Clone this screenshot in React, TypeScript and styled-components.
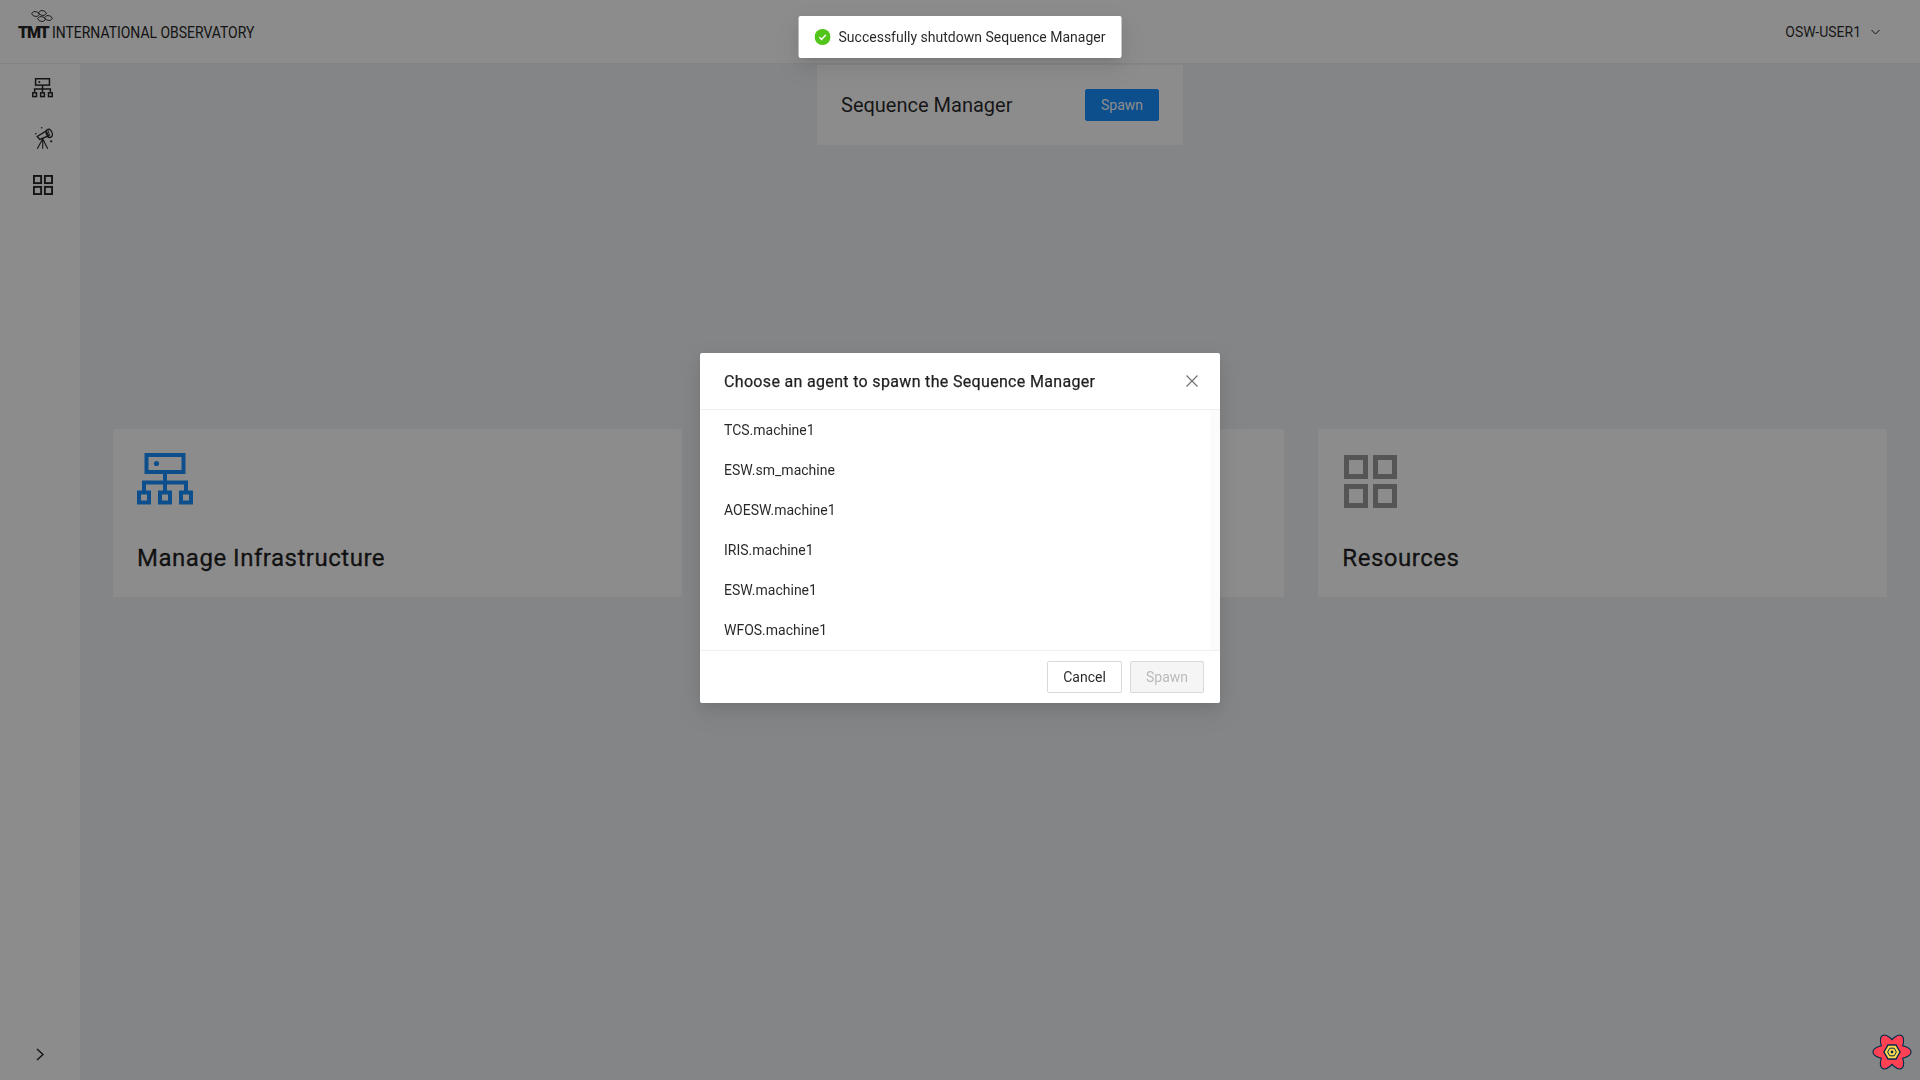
import React from "react";
import styled, { createGlobalStyle } from "styled-components";

const agents = [
  "TCS.machine1",
  "ESW.sm_machine",
  "AOESW.machine1",
  "IRIS.machine1",
  "ESW.machine1",
  "WFOS.machine1",
];

const meshCells = [
  [0, 1],
  [7, 0],
  [6, 6],
  [13, 5],
];

function InfraIcon({ size }: { size: number }) {
  return (
    <svg width={size} viewBox="0 0 56 52" fill="none" stroke="currentColor" strokeWidth="4">
      <rect x="9.5" y="2" width="37" height="17" />
      <circle cx="19.5" cy="10.5" r="2.6" fill="currentColor" stroke="none" />
      <path d="M28 19v19M7 38V29.5h42V38" />
      <rect x="2" y="39.5" width="10" height="10" />
      <rect x="23" y="39.5" width="10" height="10" />
      <rect x="44" y="39.5" width="10" height="10" />
    </svg>
  );
}

function GridIcon({ size }: { size: number }) {
  return (
    <svg width={size} height={size} viewBox="0 0 53 53" fill="none" stroke="currentColor" strokeWidth="5">
      <rect x="2.5" y="2.5" width="19" height="19" />
      <rect x="31.5" y="2.5" width="19" height="19" />
      <rect x="2.5" y="31.5" width="19" height="19" />
      <rect x="31.5" y="31.5" width="19" height="19" />
    </svg>
  );
}

function TelescopeIcon({ size }: { size: number }) {
  return (
    <svg width={size} viewBox="0 0 18 22" fill="none" stroke="currentColor" strokeWidth="1.1">
      <path d="M2.2 9.500l9-5.600 2.300 5-8.800 3.600z" strokeWidth="1.400" />
      <ellipse cx="14.200" cy="6.400" rx="2.900" ry="4.300" transform="rotate(-20 14.200 6.400)" strokeWidth="1.200" />
      <path d="M12.800 2.800l2.400 7" strokeWidth="0.900" />
      <path d="M7.700 11.700L2.300 21.800M7.700 11.700v10M7.700 11.700l5 10.100" />
      <circle cx="6.700" cy="0.800" r="0.800" fill="currentColor" stroke="none" />
      <circle cx="0.800" cy="6.700" r="0.800" fill="currentColor" stroke="none" />
      <path d="M15 14.300h2.400M16.200 13.100v2.400" strokeWidth="0.900" />
    </svg>
  );
}

function TmtMesh() {
  return (
    <svg width="22" height="13" viewBox="0 0 22 13" fill="none" stroke="#262626" strokeWidth="0.900">
      {meshCells.map(([x, y]) => (
        <path key={`${x}-${y}`} transform={`translate(${x} ${y})`} d="M.5 2.500L3 .5l3.500.5L8.500 3.500 6 5.500 2.500 5z" />
      ))}
    </svg>
  );
}

function QueryLogo() {
  const petals = (
    <>
      <ellipse cx="20" cy="20" rx="18.500" ry="7" />
      <ellipse cx="20" cy="20" rx="18.500" ry="7" transform="rotate(60 20 20)" />
      <ellipse cx="20" cy="20" rx="18.500" ry="7" transform="rotate(120 20 20)" />
    </>
  );
  return (
    <svg width="40" height="40" viewBox="0 0 40 40">
      <g fill="#002c4b" stroke="#002c4b" strokeWidth="2.200">
        {petals}
      </g>
      <g fill="#ff4154">{petals}</g>
      <path d="M16 13h8l4 7-4 7h-8l-4-7z" fill="#ffd94c" stroke="#002c4b" strokeWidth="1.400" />
      <path d="M17.800 16.200h4.400l2.200 3.800-2.200 3.800h-4.400L15.600 20z" fill="none" stroke="#002c4b" strokeWidth="1" />
      <circle cx="20" cy="20" r="1.400" fill="#002c4b" />
    </svg>
  );
}

function App() {
  return (
    <>
      <GlobalStyle />
      <Page>
        <Header>
          <Logo>
            <MeshSlot>
              <TmtMesh />
            </MeshSlot>
            <LogoMark>TMT</LogoMark>
            <LogoName>INTERNATIONAL OBSERVATORY</LogoName>
          </Logo>
          <UserMenu>
            OSW-USER1
            <svg width="9" height="6" viewBox="0 0 9 6" fill="none" stroke="#262626" strokeWidth="1">
              <path d="M.5 1l4 4 4-4" />
            </svg>
          </UserMenu>
        </Header>
        <Body>
          <Sider>
            <SiderIcon $top={14} $nudge={4}>
              <InfraIcon size={21} />
            </SiderIcon>
            <SiderIcon $top={29} $nudge={8}>
              <TelescopeIcon size={18} />
            </SiderIcon>
            <SiderIcon $top={26} $nudge={6}>
              <GridIcon size={20} />
            </SiderIcon>
            <CollapseTrigger>
              <svg width="8" height="13" viewBox="0 0 8 13" fill="none" stroke="#262626" strokeWidth="1.500">
                <path d="M1 1l6 5.500L1 12" />
              </svg>
            </CollapseTrigger>
          </Sider>
          <Content>
            <SequenceCard>
              <SequenceTitle>Sequence Manager</SequenceTitle>
              <PrimaryButton>Spawn</PrimaryButton>
            </SequenceCard>
            <CardRow>
              <TileCard>
                <TileIcon $color="#1890ff" $inset={0}>
                  <InfraIcon size={56} />
                </TileIcon>
                <TileTitle>Manage Infrastructure</TileTitle>
              </TileCard>
              <TileCard>
                <TileIcon $color="#1890ff" $inset={0}>
                  <TelescopeIcon size={44} />
                </TileIcon>
              </TileCard>
              <TileCard>
                <TileIcon $color="#9b9b9b" $inset={2}>
                  <GridIcon size={53} />
                </TileIcon>
                <TileTitle>Resources</TileTitle>
              </TileCard>
            </CardRow>
          </Content>
        </Body>
      </Page>

      <Mask>
        <Modal>
          <ModalHeader>
            <ModalTitle>Choose an agent to spawn the Sequence Manager</ModalTitle>
            <svg width="12" height="12" viewBox="0 0 12 12" fill="none" stroke="#737373" strokeWidth="1.200">
              <path d="M.5.500l11 11M11.500.500l-11 11" />
            </svg>
          </ModalHeader>
          <AgentList>
            {agents.map((agent) => (
              <AgentRow key={agent}>{agent}</AgentRow>
            ))}
          </AgentList>
          <ModalFooter>
            <FooterButton>Cancel</FooterButton>
            <FooterButton disabled>Spawn</FooterButton>
          </ModalFooter>
        </Modal>
      </Mask>

      <Toast>
        <svg width="16" height="16" viewBox="0 0 16 16">
          <circle cx="8" cy="8" r="8" fill="#52c41a" />
          <path d="M4.800 8.200l2.200 2.200 4.200-4.400" fill="none" stroke="#fff" strokeWidth="1.500" />
        </svg>
        Successfully shutdown Sequence Manager
      </Toast>

      <DevtoolsButton>
        <QueryLogo />
      </DevtoolsButton>
    </>
  );
}

const GlobalStyle = createGlobalStyle`
  * {
    box-sizing: border-box;
  }

  body {
    margin: 0;
    background: #f0f2f5;
    color: rgba(0, 0, 0, 0.85);
    font-family: Roboto, "Liberation Sans", sans-serif;
    font-size: 14px;
  }
`;

const Page = styled.div`
  display: flex;
  flex-direction: column;
  height: 100vh;
  overflow: hidden;
`;

const Header = styled.header`
  display: flex;
  justify-content: space-between;
  align-items: center;
  flex: 0 0 64px;
  padding: 0 40px 0 18px;
  background: #ffffff;
  border-bottom: 1px solid #f0f0f0;
`;

const Logo = styled.div`
  position: relative;
  display: flex;
  align-items: baseline;
  gap: 4px;
  color: #262626;
`;

const MeshSlot = styled.div`
  position: absolute;
  left: 13px;
  top: -12px;
  line-height: 0;
`;

const LogoMark = styled.span`
  font-size: 16px;
  font-weight: 900;
  letter-spacing: -1.2px;
`;

const LogoName = styled.span`
  display: inline-block;
  font-size: 17px;
  transform: scaleX(0.82);
  transform-origin: left center;
  width: 202px;
  white-space: nowrap;
`;

const UserMenu = styled.div`
  display: flex;
  align-items: center;
  gap: 10px;
  font-size: 14px;
`;

const Body = styled.div`
  display: flex;
  flex: 1;
  min-height: 0;
`;

const Sider = styled.aside`
  display: flex;
  flex-direction: column;
  flex: 0 0 80px;
  background: #ffffff;
  color: #262626;
`;

const SiderIcon = styled.div<{ $top: number; $nudge: number }>`
  display: flex;
  justify-content: center;
  margin-top: ${({ $top }) => $top}px;
  padding-left: ${({ $nudge }) => $nudge}px;
  line-height: 0;
`;

const CollapseTrigger = styled.div`
  display: flex;
  justify-content: center;
  align-items: center;
  height: 52px;
  margin-top: auto;
`;

const Content = styled.main`
  display: flex;
  flex-direction: column;
  align-items: center;
  flex: 1;
  padding: 1px 33px 0;
`;

const SequenceCard = styled.section`
  display: flex;
  justify-content: space-between;
  align-items: center;
  width: 366px;
  height: 80px;
  padding: 0 24px;
  background: #ffffff;
`;

const SequenceTitle = styled.span`
  font-size: 20px;
`;

const PrimaryButton = styled.button`
  width: 74px;
  height: 32px;
  padding: 0;
  border: 1px solid #1890ff;
  border-radius: 2px;
  background: #1890ff;
  color: #ffffff;
  font: inherit;
`;

const CardRow = styled.div`
  display: grid;
  grid-template-columns: repeat(3, 1fr);
  gap: 34px;
  width: 100%;
  margin-top: 284px;
`;

const TileCard = styled.section`
  height: 168px;
  padding: 24px;
  background: #ffffff;
`;

const TileIcon = styled.div<{ $color: string; $inset: number }>`
  height: 60px;
  padding: ${({ $inset }) => $inset}px 0 0 ${({ $inset }) => $inset}px;
  color: ${({ $color }) => $color};
  line-height: 0;
`;

const TileTitle = styled.h2`
  margin: 29px 0 0;
  font-size: 24px;
  font-weight: 400;
  letter-spacing: 0.52px;
  line-height: 32px;
  -webkit-text-stroke: 0.35px currentColor;
`;

const Mask = styled.div`
  position: fixed;
  inset: 0;
  display: flex;
  justify-content: center;
  padding-top: 353px;
  background: rgba(0, 0, 0, 0.45);
`;

const Modal = styled.div`
  display: flex;
  flex-direction: column;
  width: 520px;
  height: 350px;
  border-radius: 2px;
  background: #ffffff;
  box-shadow: 0 3px 6px -4px rgba(0, 0, 0, 0.12), 0 6px 16px rgba(0, 0, 0, 0.08),
    0 9px 28px 8px rgba(0, 0, 0, 0.05);
`;

const ModalHeader = styled.div`
  display: flex;
  justify-content: space-between;
  align-items: center;
  flex: 0 0 57px;
  padding: 0 22px 0 24px;
  border-bottom: 1px solid #f0f0f0;
`;

const ModalTitle = styled.div`
  font-size: 16px;
  font-weight: 400;
  letter-spacing: 0.33px;
  -webkit-text-stroke: 0.25px currentColor;
`;

const AgentList = styled.div`
  flex: 1;
  min-height: 0;
  overflow: hidden;
  border-right: 10px solid #fbfbfb;
`;

const AgentRow = styled.div`
  height: 40px;
  padding: 0 24px;
  line-height: 40px;
`;

const ModalFooter = styled.div`
  display: flex;
  justify-content: flex-end;
  align-items: center;
  gap: 8px;
  flex: 0 0 53px;
  padding: 0 16px;
  border-top: 1px solid #f0f0f0;
`;

const FooterButton = styled.button`
  width: 75px;
  height: 32px;
  padding: 0;
  border: 1px solid #d9d9d9;
  border-radius: 2px;
  background: #ffffff;
  color: rgba(0, 0, 0, 0.85);
  font: inherit;

  &:disabled {
    width: 74px;
    background: #f5f5f5;
    color: rgba(0, 0, 0, 0.25);
  }
`;

const Toast = styled.div`
  position: fixed;
  top: 16px;
  left: 50%;
  display: flex;
  align-items: center;
  gap: 8px;
  height: 42px;
  padding: 0 16px;
  transform: translateX(-50%);
  border-radius: 2px;
  background: #ffffff;
  box-shadow: 0 3px 6px -4px rgba(0, 0, 0, 0.12), 0 6px 16px rgba(0, 0, 0, 0.08),
    0 9px 28px 8px rgba(0, 0, 0, 0.05);
  white-space: nowrap;
`;

const DevtoolsButton = styled.div`
  position: fixed;
  right: 8px;
  bottom: 8px;
  line-height: 0;
`;

export default App;
